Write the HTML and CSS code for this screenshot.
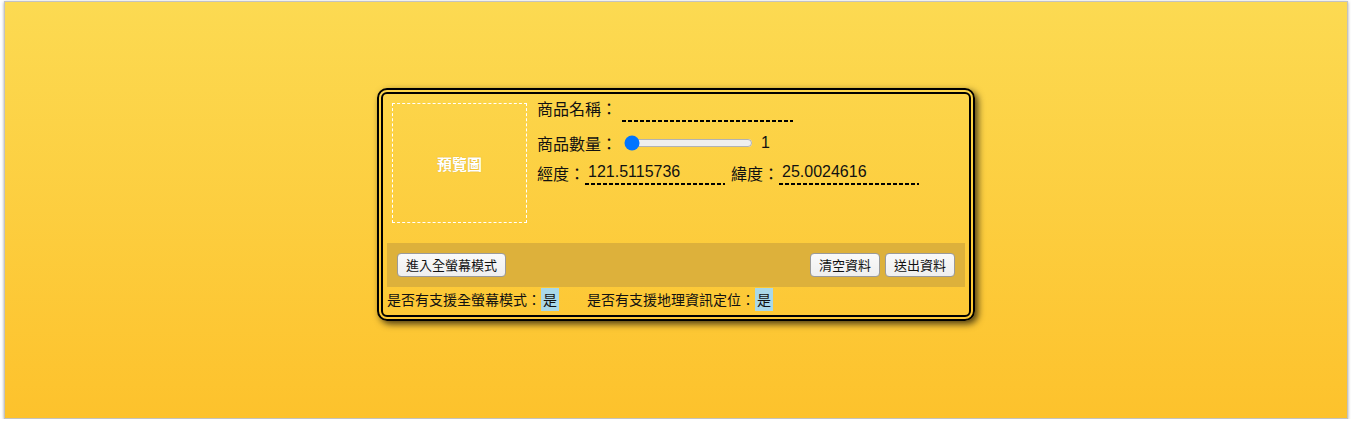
FILE: index.html
```html
<!DOCTYPE html>
<html lang="zh-Hant">
<head>
<meta charset="utf-8">
<title>商品</title>
<link rel="stylesheet" href="styles.css">
</head>
<body>
<div class="page">
  <div class="card">
    <div class="top">
      <div class="preview">預覽圖</div>
      <div class="fields">
        <div class="row row-name">
          <span class="label">商品名稱：</span>
          <input class="line-input name-input" type="text" value="">
        </div>
        <div class="row row-qty">
          <span class="label">商品數量：</span>
          <input class="range" type="range" min="1" max="100" value="1">
          <span class="qty-value">1</span>
        </div>
        <div class="row row-geo">
          <span class="label">經度：</span>
          <input class="line-input geo-input" type="text" value="121.5115736">
          <span class="label lat-label">緯度：</span>
          <input class="line-input geo-input" type="text" value="25.0024616">
        </div>
      </div>
    </div>
    <div class="footer">
      <button class="btn" type="button">進入全螢幕模式</button>
      <div class="actions">
        <button class="btn" type="button">清空資料</button>
        <button class="btn" type="button">送出資料</button>
      </div>
    </div>
    <div class="status">
      <span class="status-item">是否有支援全螢幕模式：<span class="yes">是</span></span>
      <span class="status-item">是否有支援地理資訊定位：<span class="yes">是</span></span>
    </div>
  </div>
</div>
</body>
</html>
```

FILE: styles.css
```css
* { box-sizing: border-box; }

html, body {
  margin: 0;
  padding: 0;
  background: #ffffff;
}

body {
  font-family: "Liberation Sans", "Noto Sans CJK TC", sans-serif;
  color: #111;
}

.page {
  margin: 1px 3px 0 4px;
  height: 418px;
  border: 1px solid #c2c2c2;
  box-shadow: 0 1px 3px rgba(0, 0, 0, 0.35);
  background: linear-gradient(180deg, #fcda52 0%, #fdc22c 100%);
  display: flex;
  justify-content: center;
  align-items: flex-start;
  padding-top: 86px;
}

.card {
  width: 598px;
  border: 6px double #000;
  border-radius: 10px;
  padding: 4px;
  box-shadow: 3px 3px 7px rgba(0, 0, 0, 0.7);
  display: flex;
  flex-direction: column;
}

.top {
  height: 145px;
  display: flex;
  align-items: flex-start;
}

.preview {
  width: 135px;
  height: 120px;
  margin: 5px 5px 0 5px;
  border: 1px dashed #fff;
  color: #fff;
  font-family: "Noto Sans CJK TC", sans-serif;
  font-weight: bold;
  font-size: 15px;
  display: flex;
  align-items: center;
  justify-content: center;
  text-shadow: 0 0 1px rgba(120, 90, 0, 0.35);
}

.fields {
  padding-left: 5px;
  display: flex;
  flex-direction: column;
}

.row {
  display: flex;
  align-items: flex-end;
  height: 24px;
}

.row-name {
  align-items: flex-start;
}

.row-name .label {
  margin-top: -1px;
}

.label {
  font-family: "Noto Sans CJK TC", sans-serif;
  font-size: 16px;
  line-height: 22px;
  height: 22px;
  color: #111;
  white-space: nowrap;
}

.line-input {
  height: 24px;
  border: none;
  background-color: transparent;
  background-image: linear-gradient(to right, #000 0, #000 4px, transparent 4px, transparent 6px);
  background-size: 6px 2px;
  background-repeat: repeat-x;
  background-position: left bottom;
  font-family: "Liberation Sans", sans-serif;
  font-size: 16px;
  color: #111;
  padding: 0 3px 2px 3px;
  margin: 0;
  outline: none;
}

.name-input {
  width: 171px;
  margin-left: 5px;
}

.row-qty {
  margin-top: 10px;
  height: 22px;
  align-items: center;
}

.range {
  width: 129px;
  margin: 0 2px 0 7px;
}

.qty-value {
  margin-left: 6px;
  font-size: 16px;
  line-height: 22px;
}

.row-geo {
  margin-top: 7px;
}

.row-geo .label {
  margin-bottom: 1px;
}

.geo-input {
  width: 140px;
}

.lat-label {
  margin-left: 6px;
}

.footer {
  height: 44px;
  background: #ddb13b;
  padding: 10px 10px 10px 10px;
  display: flex;
  justify-content: space-between;
  align-items: center;
}

.actions {
  display: flex;
  gap: 5px;
}

.btn {
  height: 24px;
  padding: 0 8px;
  font-family: "Noto Sans CJK TC", sans-serif;
  font-size: 13px;
  line-height: 20px;
  color: #111;
  background: linear-gradient(#fafafa, #efefef);
  border: 1px solid #9a9a9a;
  border-radius: 4px;
}

.status {
  height: 24px;
  display: flex;
  align-items: center;
  font-family: "Noto Sans CJK TC", sans-serif;
  font-size: 14px;
  color: #111;
  white-space: nowrap;
}

.status-item {
  margin-right: 28px;
}

.yes {
  background: #a9d8e8;
  padding: 1px 2px 2px 2px;
}
```
